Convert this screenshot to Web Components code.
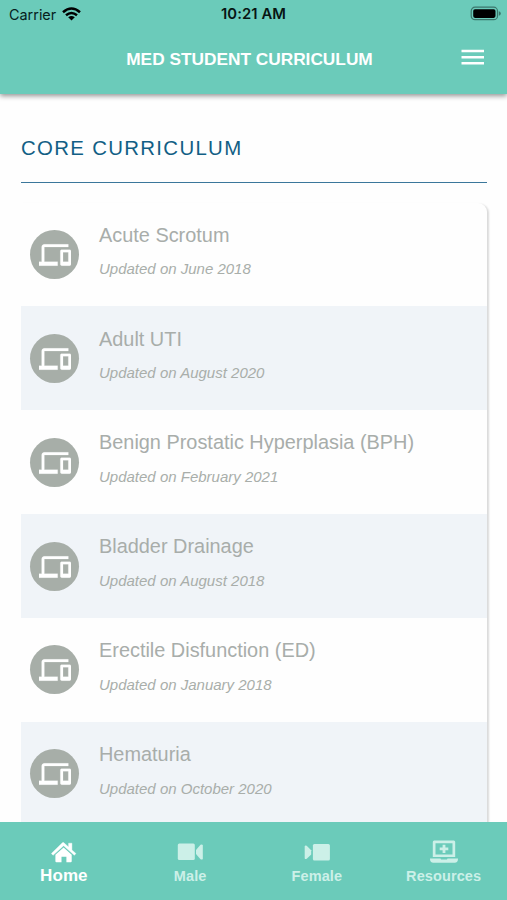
<!DOCTYPE html>
<html lang="en">
<head>
<meta charset="utf-8">
<title>Med Student Curriculum</title>
<style>
html,body{margin:0;height:100%;overflow:hidden;background:#fefefe}
body{font-family:"Liberation Sans",Arial,sans-serif}
</style>
</head>
<body>
<med-app></med-app>
<script>
class Base extends HTMLElement{
  constructor(){super();this.attachShadow({mode:'open'});}
  connectedCallback(){this.shadowRoot.innerHTML=this.render();}
}
const icons={
home:'<svg width="26" height="22" viewBox="0 0 26 22" fill="currentColor"><path d="M12.6 1.6 17.6 6V2.2h3.3v6.7l4 3.600-1.500 1.800L12.600 4.800 2 14.300.4 12.500 11.400 1.700q.6-.5 1.200-.1z" stroke="currentColor" stroke-width=".4"/><path d="m12.600 6.600 8.100 7.100v6.600q0 1-1 1h-4.300v-5.500h-4.900v5.500H5.400q-1 0-1-1v-6.600z"/></svg>',
male:'<svg width="26" height="22" viewBox="0 0 26 22" fill="currentColor"><rect x=".8" y="2.600" width="17" height="16.500" rx="1.500"/><path d="m19 9 4.500-5.200q1.600-.9 2.300.3v13.800q-.7 1.100-2.300.3L19 13z"/></svg>',
female:'<svg width="26" height="22" viewBox="0 0 26 22" fill="currentColor"><rect x="8.900" y="3" width="17" height="16.500" rx="1.500"/><path d="M7.200 9.200 2.700 4.800Q1 4 .7 5.400v11.800q.3 1.400 2 .6l4.500-4.400z"/></svg>',
resources:'<svg width="30" height="24" viewBox="0 0 30 24" fill="currentColor"><path fill-rule="evenodd" d="M5.200.6h19.600q1.400 0 1.400 1.500V17H3.800V2.100Q3.800.6 5.200.6zM6.500 3.200v11.200h17V3.200z"/><path d="M13.600 4.700h2.800v2.800h2.900v2.800h-2.900v2.800h-2.800v-2.800h-2.900V7.500h2.900zM1 18.400h10.500q.3 1.200 1.500 1.200h4q1.200 0 1.500-1.200H29v.6q0 3.700-3.400 3.700H4.400Q1 22.700 1 19z"/></svg>'
};
customElements.define('status-bar',class extends Base{render(){return `<style>
:host{display:grid;grid-template-columns:1fr auto 1fr;align-items:center;height:27px;font:500 14.500px/27px Inter,sans-serif;color:#06211d;padding:0 6px 0 9px}
.l{display:flex;align-items:center;gap:6px;font-weight:400;font-size:14.400px}.t{font-weight:600;font-size:14.800px;letter-spacing:.1px;color:#071513;margin-left:-3px;padding-top:1px}.r{display:flex;justify-content:flex-end}svg{display:block}
</style><div class="l"><span>Carrier</span><svg width="19" height="14" viewBox="0 0 19 14" fill="none" stroke="#000" stroke-width="2.500"><path d="M1 5.300Q9.500-2.300 18 5.300M4 8.300q5.500-4.700 11 0"/><path d="M9.500 13.500 6.200 10.300q3.300-2.800 6.600 0z" fill="#000" stroke="none"/></svg></div><span class="t">10:21 AM</span><div class="r"><svg width="31" height="16" viewBox="0 0 31 16"><rect x="1.200" y="1.200" width="26.300" height="12.500" rx="3.800" fill="none" stroke="#3b776c" stroke-width="1.200"/><rect x="3.200" y="3.200" width="22.300" height="8.700" rx="1.800" fill="#000"/><path d="M28.800 5.200q2 .6 2 2.300t-2 2.300z" fill="#3b776c"/></svg></div>`}});
customElements.define('app-header',class extends Base{render(){return `<style>
:host{display:block;height:94px;flex:none;background:#6bcbba;box-shadow:0 2px 5px rgba(0,0,0,.42);z-index:1;position:relative}
status-bar{height:27px}
.bar{display:grid;grid-template-columns:1fr auto 1fr;height:67px;padding:0 23px 0 15px}
h1{margin:0;font-size:17.300px;line-height:65px;letter-spacing:-.01px;color:#fff;white-space:nowrap}
svg{justify-self:end;margin-top:21px}
</style><status-bar></status-bar><div class="bar"><span></span><h1><slot></slot></h1><svg width="23" height="18" viewBox="0 0 23 18" fill="#fff"><path d="M.5 1.700h22.500v2.500H.5zM.5 7.900h22.500v2.500H.5zM.5 14h22.500v2.500H.5z"/></svg></div>`}});
customElements.define('section-title',class extends Base{render(){return `<style>
:host{display:block;box-sizing:border-box;height:62px;border-bottom:1.500px solid #3b779b;color:#125f85}
h2{margin:0;font-weight:400;font-size:20.400px;line-height:55px;letter-spacing:1.320px}
</style><h2><slot></slot></h2>`}});
customElements.define('topic-row',class extends Base{render(){return `<style>
:host{display:flex;height:103.850px;box-sizing:border-box;padding:0 10px 0 9px;gap:20px;color:#a9aeaa}
:host([alt]){background:#f0f4f8}
.i{width:49px;height:49px;border-radius:50%;background:#a7aea8;margin-top:27.500px;flex:none;display:grid;place-items:center}
.i svg{margin:1px 0 0 1px}
h3{margin:21.300px 0 0;font-weight:400;font-size:19.900px;line-height:22px;letter-spacing:0;white-space:nowrap;color:#a8adaa}
p{margin:14.500px 0 0;font-style:italic;font-size:15px;line-height:18px;letter-spacing:0;white-space:nowrap}
</style><div class="i"><svg width="32" height="32" viewBox="0 0 24 24" fill="#fff" stroke="#fff" stroke-width=".15"><path d="M4 6h18V4H4c-1.100 0-2 .9-2 2v11H0v3h14v-3H4V6zm19 2h-6c-.550 0-1 .450-1 1v10c0 .550.450 1 1 1h6c.550 0 1-.450 1-1V9c0-.550-.450-1-1-1zm-1 9h-4v-7h4v7z"/></svg></div><div><h3><slot></slot></h3><p><slot name="date"></slot></p></div>`}});
customElements.define('topic-list',class extends Base{render(){return `<style>
:host{display:block;margin-top:19.500px;background:#fefefe;border-radius:0 9px 0 0;box-shadow:2px 1px 2px rgba(0,0,0,.14)}
</style><slot></slot>`}});
customElements.define('tab-item',class extends Base{render(){return `<style>
:host{display:flex;flex-direction:column;align-items:center;color:#ccf0e8;font-weight:700;font-size:14.500px;letter-spacing:.100px}
:host([active]){color:#fff;font-size:17px;letter-spacing:.1px;padding-left:1px}
.i{height:25px;display:grid;place-items:center}svg{display:block}span{line-height:24px}
</style><div class="i">${icons[this.getAttribute('icon')]}</div><span><slot></slot></span>`}});
customElements.define('tab-bar',class extends Base{render(){return `<style>
:host{display:grid;grid-template-columns:repeat(4,1fr);height:78px;box-sizing:border-box;padding-top:17px;background:#6bcbba;flex:none;position:relative;z-index:1}
</style><slot></slot>`}});
customElements.define('med-app',class extends Base{render(){
const t=[['Acute Scrotum','June 2018'],['Adult UTI','August 2020'],['Benign Prostatic Hyperplasia (BPH)','February 2021'],['Bladder Drainage','August 2018'],['Erectile Disfunction (ED)','January 2018'],['Hematuria','October 2020']];
return `<style>
:host{display:flex;flex-direction:column;height:900px;width:507px;overflow:hidden}
main{flex:1;min-height:0;overflow:hidden;padding:27px 20px 0 21px}
</style><app-header>MED STUDENT CURRICULUM</app-header><main><section-title>CORE CURRICULUM</section-title><topic-list>${t.map((r,i)=>`<topic-row${i%2?' alt':''}>${r[0]}<span slot="date">Updated on ${r[1]}</span></topic-row>`).join('')}</topic-list></main><tab-bar><tab-item icon="home" active>Home</tab-item><tab-item icon="male">Male</tab-item><tab-item icon="female">Female</tab-item><tab-item icon="resources">Resources</tab-item></tab-bar>`}});
</script>
</body>
</html>
